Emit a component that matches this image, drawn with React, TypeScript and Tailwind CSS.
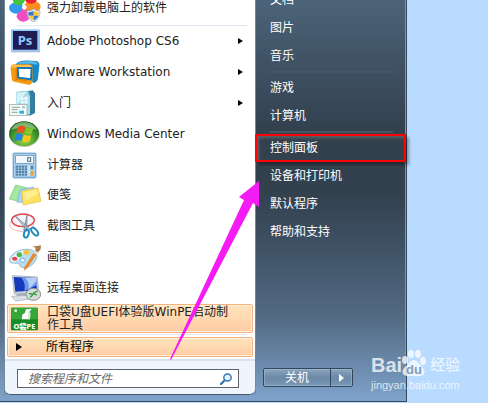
import React from "react";

type IconProps = { children: React.ReactNode };

function Icon({ children }: IconProps) {
  return (
    <svg viewBox="0 0 96 84" className="h-7 w-8 shrink-0" aria-hidden="true">
      {children}
    </svg>
  );
}

const UninstallIcon = () => (
  <Icon>
    <ellipse cx="22" cy="42" rx="22" ry="17" fill="#2f9bf0" />
    <ellipse cx="70" cy="38" rx="25" ry="18" fill="#fb8c1e" />
    <ellipse cx="30" cy="16" rx="19" ry="17" fill="#3fc43a" transform="rotate(-30 30 16)" />
    <ellipse cx="66" cy="14" rx="18" ry="15" fill="#f0202c" />
    <ellipse cx="43" cy="67" rx="20" ry="16" fill="#f04fc0" />
    <path d="M27 62 45 38l19 26z" fill="#f04fc0" />
    <circle cx="46" cy="40" r="7" fill="#fff" />
    <path d="M74 44c7 5 12 6 19 6 0 18-5 27-19 34-14-7-20-16-20-34 8 0 13-1 20-6z" fill="#e8eef4" stroke="#8a98a8" strokeWidth="2" />
    <path d="M74 50v15H59c-1-3-1-7-1-11 6 0 11-1 16-4z" fill="#3277c8" />
    <path d="M74 50c5 3 10 4 15 4 0 4 0 8-1 11H74z" fill="#f8c732" />
    <path d="M59 65h15v14c-8-4-12-8-15-14z" fill="#f8c732" />
    <path d="M74 65h14c-2 6-6 10-14 14z" fill="#3277c8" />
  </Icon>
);

const PhotoshopIcon = () => (
  <Icon>
    <rect x="7" y="9" width="86" height="67" fill="#b9bec6" />
    <rect x="6" y="7" width="85" height="66" fill="#8fc8fa" />
    <rect x="12" y="12" width="73" height="56" fill="#201b52" />
    <text x="48" y="53" textAnchor="middle" fontSize="39" fontWeight="700" fill="#8fcbff" fontFamily="'Open Sans', sans-serif">
      Ps
    </text>
  </Icon>
);

const VmwareIcon = () => (
  <Icon>
    <path d="M20 20C26 8 48 5 82 9c8 2 10 7 9 14l-4 38c-1 8-6 13-14 14z" fill="#1689c8" />
    <path d="M24 17C34 8 62 7 79 11c5 2 8 5 7 9l-22-3z" fill="#58b9e8" />
    <path d="M17 19h42c9 1 13 5 13 13l-2 39c-1 7-5 10-12 9L19 72c-8-1-11-5-11-12L5 32c0-8 4-13 12-13z" fill="#f39a12" />
    <path d="M17 21h40c7 0 12 3 13 8H8c1-5 4-8 9-8z" fill="#ffc04d" />
    <path d="M26 30h42l-2 34-38-5z" fill="#fff" stroke="#1479b5" strokeWidth="6" />
    <path d="M22 29v34l32 5" fill="none" stroke="#d87f08" strokeWidth="4" />
  </Icon>
);

const GettingStartedIcon = () => (
  <Icon>
    <path d="M21 9 62 5l16 9v58l-16 8-41-8z" fill="#5cabc2" />
    <path d="m62 5 9-1 7 9v58l-16 9z" fill="#347e9c" />
    <path d="M21 9 55 6l8 16v54l-42-4z" fill="#a7dbe6" />
    <path d="M23 11 53 8l-30 40z" fill="#d6f2f5" />
    <path d="m35 26 9-2v9l-9 1zm11-2 10-2v10l-10 1zM35 36l9-1v9l-9-1zm11-1 10-1v10l-10-1z" fill="#ebfbff" />
    <rect x="1" y="46" width="53" height="34" fill="#f7faf7" stroke="#8fa2a6" strokeWidth="2" />
    <path d="M8 55h25M8 62h18M8 70h18" stroke="#82ab9c" strokeWidth="3" />
    <rect x="31" y="65" width="14" height="9" fill="#22b4ea" />
    <rect x="39" y="51" width="9" height="7" fill="#a6c8d6" />
  </Icon>
);

const MediaCenterIcon = () => (
  <Icon>
    <defs>
      <radialGradient id="wmc" cx="50%" cy="75%" r="70%">
        <stop offset="0" stopColor="#9de04c" />
        <stop offset="0.6" stopColor="#3f962a" />
        <stop offset="1" stopColor="#1d5c1c" />
      </radialGradient>
    </defs>
    <ellipse cx="46" cy="43" rx="46" ry="38" fill="#b7c4b4" />
    <ellipse cx="45" cy="41" rx="45" ry="37" fill="url(#wmc)" />
    <path d="M7 31C14 12 29 7 45 7s31 6 38 24c-20-12-56-10-76 0z" fill="#b9e3a4" opacity="0.6" />
    <path d="M27 20c7-4 14-4 22 0l-6 20c-7-4-15-4-21 0z" fill="#f4511e" />
    <path d="M51 22c8 4 15 4 23 0l-6 19c-8 4-16 3-22-1z" fill="#83c72c" />
    <path d="M21 43c7-4 14-3 21 1l-5 20c-7-4-15-4-22-1z" fill="#2784dd" />
    <path d="M45 44c7 4 15 5 22 1l-5 19c-8 4-16 4-22 0z" fill="#fcc419" />
  </Icon>
);

const CalculatorIcon = () => (
  <Icon>
    <rect x="12" y="6" width="69" height="75" rx="4" fill="#86b9df" stroke="#5c93bf" strokeWidth="2" />
    <rect x="15" y="9" width="63" height="68" rx="3" fill="#a6d0ee" />
    <rect x="20" y="13" width="54" height="24" fill="#f2f8fd" stroke="#5d8aae" strokeWidth="2" />
    <rect x="56" y="20" width="9" height="11" fill="none" stroke="#4a657c" strokeWidth="3" />
    {[20, 29, 38, 47, 56].map((x) =>
      [44, 52, 60, 68].map((y) => <rect key={`${x}-${y}`} x={x} y={y} width="7" height="6" fill={x > 50 ? "#d8ecf8" : "#55809f"} />),
    )}
    <path d="M65 44h8v11h-8z" fill="#55809f" />
    <path d="M65 59h8v15h-8z" fill="#f3a32c" />
  </Icon>
);

const StickyNotesIcon = () => (
  <Icon>
    <path d="m20 12 38 10-18 42-39-10z" fill="#a5e6a0" stroke="#76c777" strokeWidth="2" />
    <path d="m34 26 40-8 4 42-54 4z" fill="#a5d5fb" stroke="#6eaee4" strokeWidth="2" />
    <path d="m37 30 50-9 9 40-53 11z" fill="#ffe261" stroke="#e3bd38" strokeWidth="2" />
    <path d="m42 34 42-8 3 12-37 22z" fill="#fff3a2" opacity="0.7" />
  </Icon>
);

const SnippingIcon = () => (
  <Icon>
    <ellipse cx="38" cy="38" rx="36" ry="20" fill="none" stroke="#f39696" strokeWidth="2" />
    <ellipse cx="42" cy="25" rx="34" ry="19" fill="#f2f3fb" stroke="#dd4348" strokeWidth="4" />
    <path d="m17 10 46 40-8 6z" fill="#c3cdd5" stroke="#697985" strokeWidth="2" />
    <path d="m54 10-10 44 9 3z" fill="#a8b5bf" stroke="#697985" strokeWidth="2" />
    <ellipse cx="52" cy="65" rx="7" ry="12" fill="none" stroke="#228dc0" strokeWidth="6" transform="rotate(15 52 65)" />
    <ellipse cx="77" cy="59" rx="7" ry="14" fill="none" stroke="#228dc0" strokeWidth="6" transform="rotate(-40 77 59)" />
  </Icon>
);

const PaintIcon = () => (
  <Icon>
    <path d="M2 50C6 31 30 18 56 19c19 1 31 13 27 26-6 19-24 31-41 29-12-1-7-11-17-13-12-1-25 1-23-11z" fill="#b9def2" stroke="#6ca8ca" strokeWidth="2" />
    <path d="M6 47c10-18 28-26 48-25L18 58C10 60 5 56 6 47z" fill="#e3f4fd" />
    <ellipse cx="17" cy="47" rx="8" ry="6" fill="#e04a4a" />
    <ellipse cx="31" cy="35" rx="8" ry="7" fill="#4db34b" />
    <ellipse cx="52" cy="28" rx="9" ry="7" fill="#f6c232" />
    <ellipse cx="41" cy="52" rx="7" ry="6" fill="#fff" stroke="#4a95c4" strokeWidth="2" />
    <path d="m74 30 9 4-30 42-7 6 1-9z" fill="#ee8c22" stroke="#c3680f" strokeWidth="1" />
    <path d="m73 30 10 6 5-8-9-6z" fill="#d3dbe0" />
    <path d="m78 22 2-6-8-7c8 1 17 0 24-2-1 5 0 9-2 13l-7 8z" fill="#ad7d4b" />
  </Icon>
);

const RemoteDesktopIcon = () => (
  <Icon>
    <path d="m10 5 75 4 4 47-73 4z" fill="#cbd2d9" stroke="#929da7" strokeWidth="2" />
    <path d="m14 9 67 3 3 37-65 4z" fill="#1738bd" />
    <path d="m36 10 45 2 3 21-38 18c4-16 0-29-10-41z" fill="#6b9aeb" />
    <path d="m49 11 32 1 1 9-24 27c4-14 0-28-9-37z" fill="#b4cff5" />
    <path d="m23 60 34-2 4 9-39 3z" fill="#a6b2bc" />
    <path d="m7 67 45-3 10 11-42 6z" fill="#dce2e7" stroke="#9ba8b3" strokeWidth="2" />
    <ellipse cx="73" cy="61" rx="22" ry="18" fill="#d6dad7" stroke="#868f89" strokeWidth="3" />
    <path d="m60 58 12 3-8 9M86 51l-12 6 9 7" fill="none" stroke="#219d3b" strokeWidth="4" />
  </Icon>
);

const PocketPeIcon = () => (
  <Icon>
    <rect x="6" y="8" width="81" height="68" rx="3" fill="#168d25" />
    <rect x="6" y="8" width="81" height="35" rx="3" fill="#36a63b" />
    <path d="m38 43 2-14 8-6 3-10 17-1-8 10 3 21z" fill="#fff" />
    <path d="m58 20 7 3-2 20h-7z" fill="#d9e9d9" />
    <circle cx="20" cy="17" r="4" fill="#e5ffe0" />
    <text x="46" y="71" textAnchor="middle" fontSize="22" fontWeight="800" fill="#fff" fontFamily="'Noto Sans', 'Noto Sans CJK SC', sans-serif">
      O袋PE
    </text>
  </Icon>
);

const programs = [
  { label: "Adobe Photoshop CS6", icon: PhotoshopIcon, more: true },
  { label: "VMware Workstation", icon: VmwareIcon, more: true },
  { label: "入门", icon: GettingStartedIcon, more: true },
  { label: "Windows Media Center", icon: MediaCenterIcon },
  { label: "计算器", icon: CalculatorIcon },
  { label: "便笺", icon: StickyNotesIcon },
  { label: "截图工具", icon: SnippingIcon },
  { label: "画图", icon: PaintIcon },
  { label: "远程桌面连接", icon: RemoteDesktopIcon },
];

const placeGroups = [
  ["文档", "图片", "音乐"],
  ["游戏", "计算机"],
  ["控制面板", "设备和打印机", "默认程序", "帮助和支持"],
];

function Triangle({ className }: { className: string }) {
  return (
    <svg viewBox="0 0 6 10" preserveAspectRatio="none" className={className} aria-hidden="true">
      <path d="M0 0 6 5 0 10z" fill="currentColor" />
    </svg>
  );
}

function ProgramsPane() {
  return (
    <div className="flex w-[250px] flex-col overflow-hidden rounded-b-md border-b border-[#43566c] bg-white">
      <button className="-mt-2 flex h-[33px] items-center gap-1.5 px-1 pb-0.5 text-left">
        <UninstallIcon />
        <span>强力卸载电脑上的软件</span>
      </button>
      <hr className="mr-2 ml-3 border-[#dfe7f1]" />
      <ul className="flex h-[277px] flex-col">
        {programs.map(({ label, icon: ItemIcon, more }) => (
          <li key={label} className="flex flex-1">
            <button className="flex w-full items-center gap-1.5 pr-3 pl-1 text-left">
              <ItemIcon />
              <span className="grow">{label}</span>
              {more && <Triangle className="h-1.5 w-[5px] text-black" />}
            </button>
          </li>
        ))}
      </ul>
      <button className="mx-0.5 mt-px flex h-[29px] items-center gap-1.5 rounded-xs border border-[#f6b27c] bg-linear-to-b from-[#ffe4bd] to-[#ffcca4] pl-px text-left leading-[13px] ring-1 ring-[#fff0dc] ring-inset">
        <PocketPeIcon />
        <span className="w-[184px]">口袋U盘UEFI体验版WinPE启动制作工具</span>
      </button>
      <hr className="mr-2 ml-3 mt-px mb-0.5 border-[#dfe7f1]" />
      <button className="mx-0.5 mb-0.5 flex h-5 items-center gap-6 rounded-xs border border-[#f6b27c] bg-linear-to-b from-[#ffe4bd] to-[#ffcca4] pl-2 text-left text-black ring-1 ring-[#fff0dc] ring-inset">
        <Triangle className="h-2 w-1.5" />
        <span>所有程序</span>
      </button>
      <div className="border-t-2 border-[#d8e3ee] bg-[#f0f4fc] pt-2 pr-4 pb-1.5 pl-3">
        <label className="flex h-[19px] items-center border border-[#59626d] bg-white pr-1.5 pl-2.5">
          <input
            type="text"
            aria-label="搜索程序和文件"
            placeholder="搜索程序和文件"
            className="min-w-0 grow bg-transparent text-xs italic outline-none placeholder:text-[#666]"
          />
          <svg viewBox="0 0 12 12" className="h-3 w-3 shrink-0" aria-hidden="true">
            <path d="M5 7 1 11" stroke="#2d6ca8" strokeWidth="2" strokeLinecap="round" />
            <ellipse cx="7.5" cy="4.5" rx="3.7" ry="3.5" fill="#e8f5ff" stroke="#347ab8" strokeWidth="1.5" />
          </svg>
        </label>
      </div>
    </div>
  );
}

function PlacesPane() {
  return (
    <nav className="flex grow flex-col text-white">
      <div className="-mt-3.5 flex flex-col">
        {placeGroups.map((group, index) => (
          <React.Fragment key={group[0]}>
            {index > 0 && <hr className="my-px mr-3 ml-3.5 border-t-2 border-[#465666]" />}
            <ul>
              {group.map((place) => (
                <li key={place} className="relative">
                  <button className="block h-7 w-full pl-3.5 text-left leading-7">{place}</button>
                  {place === "控制面板" && (
                    <span className="pointer-events-none absolute -inset-x-px inset-y-0 border-2 border-[#fb0404] shadow-[3px_3px_3px_rgba(0,0,0,0.35),inset_2px_2px_3px_rgba(110,110,110,0.7)]" />
                  )}
                </li>
              ))}
            </ul>
          </React.Fragment>
        ))}
      </div>
      <div className="mt-auto mb-2 ml-[7px] flex h-[19px] w-[90px] rounded-xs border border-[#33475d] bg-linear-to-b from-[#8ca6bf] via-[#6b88a5] to-[#7898b8] ring-1 ring-[#a9c2da]/50 ring-inset">
        <button className="grow leading-none">关机</button>
        <button aria-label="更多" className="flex w-[22px] items-center justify-center border-l border-[#33475d]">
          <Triangle className="h-2 w-[5px] text-white" />
        </button>
      </div>
    </nav>
  );
}

function Pointer() {
  return (
    <svg viewBox="0 0 90 182" className="pointer-events-none absolute top-[179px] left-[169px] h-[182px] w-[90px]" aria-hidden="true">
      <path d="M90 2 70 18l5 3L1 180l1 1 82-157 6 4z" fill="#f51bf5" />
    </svg>
  );
}

function Watermark() {
  return (
    <div className="pointer-events-none absolute top-[349px] left-[371px] text-white/75">
      <div className="flex h-7 items-end text-xl leading-6 font-bold">
        <span className="font-['Liberation_Sans',sans-serif]">Bai</span>
        <svg viewBox="0 0 24 28" className="h-7 w-6" aria-hidden="true">
          <ellipse cx="3" cy="11" rx="3" ry="4" fill="currentColor" />
          <ellipse cx="9" cy="5" rx="3" ry="4" fill="currentColor" />
          <ellipse cx="16" cy="5" rx="3" ry="4" fill="currentColor" />
          <ellipse cx="21" cy="12" rx="3" ry="4" fill="currentColor" />
          <path d="M12 11c4 0 5 4 8 7 4 4 3 9-2 9H5c-5 0-6-5-2-9 4-3 5-7 9-7z" fill="currentColor" />
          <text x="12" y="25" textAnchor="middle" fontSize="13" fontWeight="700" fill="#7f9ebc" fontFamily="'Liberation Sans', sans-serif">
            du
          </text>
        </svg>
        <span className="pl-1 text-[15px] leading-6 font-medium">经验</span>
      </div>
      <div className="text-[11px] leading-4 font-['Liberation_Sans',sans-serif]">jingyan.baidu.com</div>
    </div>
  );
}

export default function App() {
  return (
    <main className="relative h-screen overflow-hidden bg-[#b8dbff] font-['DejaVu_Sans','Noto_Sans_CJK_SC',sans-serif] text-xs text-[#222]">
      <section className="flex w-[407px] border-r border-b border-[#34475b] bg-[linear-gradient(to_bottom,#4c6379,#33414f_32%,#33414f_48%,#3d4f62_60%,#546c85_80%,#7fa3cb)] pb-[6px] pl-1">
        <div className="flex grow border-r border-[#8097a9]">
          <div className="border-x border-[#73879a]">
            <ProgramsPane />
          </div>
          <PlacesPane />
        </div>
      </section>
      <Pointer />
      <Watermark />
    </main>
  );
}
